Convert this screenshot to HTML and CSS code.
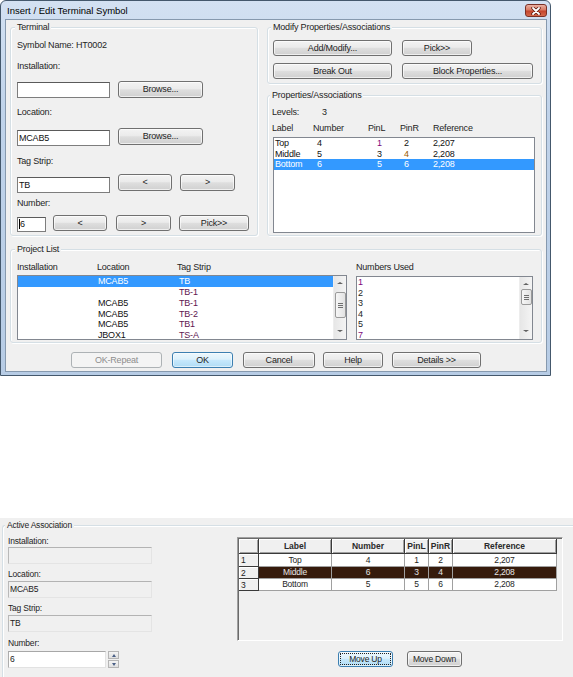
FILE: index.html
```html
<!DOCTYPE html>
<html>
<head>
	<title>Insert / Edit Terminal Symbol</title>
	<link rel="stylesheet" href="styles.css">
</head>
<body>
	<div class="window">
		<div class="titlebar">
			<span class="title">Insert / Edit Terminal Symbol</span>
			<span class="close">
				<svg width="10" height="8" viewBox="0 0 10 8">
					<path d="M2 1 L8 7 M8 1 L2 7" stroke="#5a1a10" stroke-width="3.4" stroke-linecap="round"/>
					<path d="M2 1 L8 7 M8 1 L2 7" stroke="#fff" stroke-width="1.8" stroke-linecap="round"/>
				</svg>
			</span>
		</div>

		<div class="client">
			<div class="top">
				<!-- Terminal -->
				<div class="group terminal">
					<div class="group-title">Terminal</div>
					<div class="lbl sym">Symbol Name: HT0002</div>
					<div class="lbl gap10">Installation:</div>
					<div class="row gap9">
						<div class="tb w93 off1"></div>
						<div class="btn w85 ml8">Browse...</div>
					</div>
					<div class="lbl gap9">Location:</div>
					<div class="row gap10">
						<div class="tb w93 off2">MCAB5</div>
						<div class="btn w85 ml8">Browse...</div>
					</div>
					<div class="lbl gap10">Tag Strip:</div>
					<div class="row gap7">
						<div class="tb w93 off3">TB</div>
						<div class="btn w54 ml8">&lt;</div>
						<div class="btn w55 ml8">&gt;</div>
					</div>
					<div class="lbl gap5">Number:</div>
					<div class="row gap6">
						<div class="tb w29 off2 short"><span class="caret"></span>6</div>
						<div class="btn w54 ml7 short">&lt;</div>
						<div class="btn w55 ml9 short">&gt;</div>
						<div class="btn w70 ml8 short">Pick&gt;&gt;</div>
					</div>
				</div>

				<div class="side">
					<div class="group modify">
						<div class="group-title">Modify Properties/Associations</div>
						<div class="row gap7">
							<div class="btn w119 short">Add/Modify...</div>
							<div class="btn w70 ml10 short">Pick&gt;&gt;</div>
						</div>
						<div class="row gap7">
							<div class="btn w119 short">Break Out</div>
							<div class="btn w131 ml10 short">Block Properties...</div>
						</div>
					</div>

					<div class="group props">
						<div class="group-title">Properties/Associations</div>
						<div class="lbl levels gap6"><span>Levels:</span><span>3</span></div>
						<div class="lbl prop-head gap5">
							<span>Label</span><span>Number</span><span>PinL</span><span>PinR</span><span>Reference</span>
						</div>
						<div class="listbox prop-list">
							<div class="prop-row"><span>Top</span><span>4</span><span class="c-purple">1</span><span>2</span><span>2,207</span></div>
							<div class="prop-row"><span>Middle</span><span>5</span><span>3</span><span class="c-amber">4</span><span>2,208</span></div>
							<div class="prop-row selected"><span>Bottom</span><span>6</span><span>5</span><span>6</span><span>2,208</span></div>
						</div>
					</div>
				</div>
			</div>

			<!-- Project List -->
			<div class="group project">
				<div class="group-title">Project List</div>
				<div class="project-body">
					<div class="proj-left">
						<div class="lbl proj-head"><span>Installation</span><span>Location</span><span>Tag Strip</span></div>
						<div class="listbox proj-list">
							<div class="list-rows">
								<div class="proj-row selected"><span></span><span>MCAB5</span><span>TB</span></div>
								<div class="proj-row"><span></span><span></span><span class="c-tag">TB-1</span></div>
								<div class="proj-row"><span></span><span>MCAB5</span><span class="c-tag">TB-1</span></div>
								<div class="proj-row"><span></span><span>MCAB5</span><span class="c-tag">TB-2</span></div>
								<div class="proj-row"><span></span><span>MCAB5</span><span class="c-tag">TB1</span></div>
								<div class="proj-row"><span></span><span>JBOX1</span><span class="c-tag">TS-A</span></div>
							</div>
							<div class="vscroll">
								<div class="arrow up"></div>
								<div class="thumb thumb-left"><i></i><i></i><i></i></div>
								<div class="arrow down"></div>
							</div>
						</div>
					</div>
					<div class="proj-right">
						<div class="lbl">Numbers Used</div>
						<div class="listbox used-list">
							<div class="list-rows">
								<div class="used-row c-purple">1</div>
								<div class="used-row">2</div>
								<div class="used-row">3</div>
								<div class="used-row">4</div>
								<div class="used-row">5</div>
								<div class="used-row c-purple">7</div>
							</div>
							<div class="vscroll">
								<div class="arrow up"></div>
								<div class="thumb thumb-right"><i></i><i></i><i></i></div>
								<div class="arrow down"></div>
							</div>
						</div>
					</div>
				</div>
			</div>

			<div class="actions">
				<div class="btn short w91 disabled">OK-Repeat</div>
				<div class="btn short w61 ml10 default">OK</div>
				<div class="btn short w72 ml10">Cancel</div>
				<div class="btn short w60 ml8">Help</div>
				<div class="btn short w89 ml9">Details &gt;&gt;</div>
			</div>
		</div>
	</div>

	<!-- Active association panel -->
	<div class="panel">
		<div class="group assoc">
			<div class="group-title">Active Association</div>
			<div class="assoc-body">
				<div class="assoc-left">
					<div class="lbl gap5">Installation:</div>
					<div class="field"></div>
					<div class="lbl gap5">Location:</div>
					<div class="field gap1">MCAB5</div>
					<div class="lbl gap5">Tag Strip:</div>
					<div class="field gap1">TB</div>
					<div class="lbl gap6">Number:</div>
					<div class="row gap2">
						<div class="field number">6</div>
						<div class="spin">
							<div class="spin-btn"><span class="tri up"></span></div>
							<div class="spin-btn"><span class="tri down"></span></div>
						</div>
					</div>
				</div>
				<div class="assoc-right">
					<div class="grid-frame">
						<table class="grid">
							<colgroup>
								<col class="gc-h"><col class="gc-wide"><col class="gc-wide"><col class="gc-pin"><col class="gc-pin"><col class="gc-ref">
							</colgroup>
							<tr class="grid-head">
								<th></th><th>Label</th><th>Number</th><th>PinL</th><th>PinR</th><th>Reference</th>
							</tr>
							<tr class="r1">
								<th class="rh">1</th><td>Top</td><td>4</td><td>1</td><td>2</td><td>2,207</td>
							</tr>
							<tr class="sel">
								<th class="rh">2</th><td>Middle</td><td>6</td><td>3</td><td>4</td><td>2,208</td>
							</tr>
							<tr>
								<th class="rh">3</th><td>Bottom</td><td>5</td><td>5</td><td>6</td><td>2,208</td>
							</tr>
						</table>
					</div>
					<div class="move-row">
						<div class="btn short w55 default focus">Move Up</div>
						<div class="btn short w55 ml14">Move Down</div>
					</div>
				</div>
			</div>
		</div>
	</div>
</body>
</html>
```

FILE: styles.css
```css
/* Page */

body { margin: 0; width: 573px; height: 677px; overflow: hidden; background: #fff; font-family: "Liberation Sans", Arial, sans-serif; font-size: 9px; letter-spacing: -0.2px; color: #1e1e1e; }

/* Window frame */

.window { box-sizing: border-box; width: 551px; height: 376px; border: 1px solid #44586c; border-radius: 6px 6px 0 0; background: linear-gradient(to bottom, #d3e1f2, #c0d3ea 30%, #b7cce5); display: flex; flex-direction: column; }
.titlebar { flex: none; height: 18px; display: flex; justify-content: space-between; align-items: flex-start; padding: 0 3px 0 6px; }
.title { font-size: 9.5px; letter-spacing: 0; line-height: 19px; color: #000; }
.close { box-sizing: border-box; margin-top: 3px; width: 22px; height: 13px; border: 1px solid #7a3026; border-radius: 3px; background: linear-gradient(to bottom, #eab0a2, #d87a63 45%, #c4452d 55%, #d4694c); display: flex; align-items: center; justify-content: center; }
.close svg { display: block; }
.client { flex: 1; margin: 0 3px 3px 4px; border: 1px solid #8699ae; background: #f0f0f0; padding: 7px 4px 0; }

/* Group boxes */

.group { box-sizing: border-box; border: 1px solid #d5dfe5; border-radius: 3px; box-shadow: inset 1px 1px 0 #fff, 1px 1px 0 #fff; display: flex; flex-direction: column; align-items: flex-start; }
.group-title { height: 11px; line-height: 11px; margin: -6px 0 0 -2px; padding: 0 2px; background: #f0f0f0; white-space: nowrap; }
.lbl { height: 11px; line-height: 11px; white-space: nowrap; }
.row { display: flex; align-items: flex-start; }

.gap1 { margin-top: 1px; }
.gap2 { margin-top: 2px; }
.gap5 { margin-top: 5px; }
.gap6 { margin-top: 6px; }
.gap7 { margin-top: 7px; }
.gap9 { margin-top: 9px; }
.gap10 { margin-top: 10px; }

.ml7 { margin-left: 7px; }
.ml8 { margin-left: 8px; }
.ml9 { margin-left: 9px; }
.ml10 { margin-left: 10px; }
.ml14 { margin-left: 14px; }

/* Controls */

.tb { box-sizing: border-box; height: 16px; border: 1px solid #7d7d7d; border-top-color: #5a5a5a; background: #fff; padding-left: 1px; line-height: 14px; color: #111; white-space: nowrap; }
.tb.short { height: 15px; line-height: 13px; }
.off1 { margin-top: 1px; }
.off2 { margin-top: 2px; }
.off3 { margin-top: 3px; }
.caret { display: inline-block; width: 1px; height: 10px; background: #000; vertical-align: -2px; }

.btn { box-sizing: border-box; height: 17px; border: 1px solid #707070; border-radius: 3px; background: linear-gradient(to bottom, #f3f3f3, #ebebeb 45%, #dedede 52%, #d0d0d0); box-shadow: inset 0 0 0 1px rgba(255, 255, 255, 0.65); text-align: center; line-height: 15px; color: #1e1e1e; white-space: nowrap; }
.btn.short { height: 16px; line-height: 14px; }
.btn.disabled { border-color: #adb2b5; background: #f4f4f4; box-shadow: none; color: #8d8d8d; }
.btn.default { border-color: #3c7fb1; background: linear-gradient(to bottom, #ecf7fd, #ddf1fc 45%, #c6e8fc 52%, #b0dcf5); box-shadow: inset 0 0 0 1px rgba(255, 255, 255, 0.55); }
.btn.focus { outline: 1px dotted #222; outline-offset: -3px; }

.w29 { width: 29px; }
.w54 { width: 54px; }
.w55 { width: 55px; }
.w60 { width: 60px; }
.w61 { width: 61px; }
.w70 { width: 70px; }
.w72 { width: 72px; }
.w85 { width: 85px; }
.w89 { width: 89px; }
.w91 { width: 91px; }
.w93 { width: 93px; }
.w119 { width: 119px; }
.w131 { width: 131px; }

/* Top part of the dialog */

.top { display: grid; grid-template-columns: 248px 275px; column-gap: 9px; height: 209px; }
.terminal { height: 209px; padding-left: 6px; }
.sym { margin-top: 7px; }
.side { display: flex; flex-direction: column; }
.modify { height: 57px; padding-left: 5px; }
.props { height: 141px; margin-top: 11px; padding-left: 4px; }

.levels { display: grid; grid-template-columns: 50px auto; }
.prop-head { display: grid; grid-template-columns: 41px 55px 32px 33px auto; }

.listbox { box-sizing: border-box; border: 1px solid #828790; background: #fff; overflow: hidden; }
.prop-list { margin: 3px 0 0 1px; width: 262px; height: 96px; }
.prop-row { display: grid; grid-template-columns: 42px 60px 27px 29px auto; height: 10.5px; line-height: 10.5px; padding-left: 1px; color: #111; }
.selected { background: #3399ff; color: #fff; }
.selected span { color: #fff; }

.c-purple { color: #7c0a7c; }
.c-amber { color: #9a5a00; }
.c-tag { color: #5e1650; }

/* Project list */

.project { height: 94px; margin-top: 13px; padding-left: 6px; }
.project-body { display: flex; margin-top: 7px; }
.proj-left { width: 330px; }
.proj-head { display: grid; grid-template-columns: 80px 80px auto; }
.proj-list { display: flex; margin-top: 2px; height: 65px; }
.list-rows { flex: 1; }
.proj-row { display: grid; grid-template-columns: 79px 81px auto; height: 10.8px; line-height: 10.8px; padding-left: 1px; color: #111; }
.proj-row.selected { height: 11px; }
.proj-right { width: 177px; margin-left: 9px; }
.used-list { display: flex; margin-top: 3px; height: 64px; }
.used-row { height: 10.5px; line-height: 10.5px; padding-left: 1px; }

.vscroll { width: 12px; display: flex; flex-direction: column; align-items: center; background: linear-gradient(to right, #e6e6e6, #f4f4f4); border-left: 1px solid #ededed; }
.arrow { width: 0; height: 0; border-left: 3px solid transparent; border-right: 3px solid transparent; }
.arrow.up { margin-top: 6px; border-bottom: 2px solid #606060; }
.arrow.down { margin-top: auto; margin-bottom: 7px; border-top: 2px solid #606060; }
.thumb { box-sizing: border-box; width: 11px; border: 1px solid #9a9a9a; border-radius: 2px; background: linear-gradient(to right, #f6f6f6, #e2e2e2); display: flex; flex-direction: column; align-items: center; justify-content: center; }
.thumb i { display: block; width: 5px; height: 1px; background: #6f6f6f; margin: 1px 0 0; }
.thumb-left { height: 26px; margin-top: 8px; }
.thumb-right { height: 16px; margin-top: 4px; }

.actions { display: flex; margin-top: 9px; padding-left: 61px; }

/* Active association panel */

.panel { box-sizing: border-box; margin-top: 142px; height: 159px; background: #f0f0f0; padding: 7px 0 0 2px; }
.assoc { height: 160px; border-right: none; border-bottom: none; border-radius: 3px 0 0 0; padding-left: 5px; font-size: 8.5px; }
.assoc .group-title { margin-left: -3px; }
.assoc-body { display: flex; }
.assoc-left { width: 144px; display: flex; flex-direction: column; }
.field { box-sizing: border-box; height: 17px; border: 1px solid #e4e4e4; border-top-color: #b3b3b3; border-left-color: #b9b9b9; background: #f0f0f0; padding-left: 1px; line-height: 15px; color: #222; }
.field.number { width: 98px; background: #fff; border-color: #a7a7a7 #e2e2e2 #e2e2e2 #adadad; }
.spin { margin-left: 2px; display: flex; flex-direction: column; gap: 1px; }
.spin-btn { box-sizing: border-box; width: 11px; height: 8px; border: 1px solid #b5b5b5; background: linear-gradient(to bottom, #f4f4f4, #e0e0e0); display: flex; align-items: center; justify-content: center; }
.tri { width: 0; height: 0; border-left: 2.5px solid transparent; border-right: 2.5px solid transparent; }
.tri.up { border-bottom: 3px solid #4a5f86; }
.tri.down { border-top: 3px solid #4a5f86; }

.assoc-right { margin-left: 85px; }
.grid-frame { box-sizing: border-box; margin-top: 6px; width: 326px; height: 104px; border: 1px solid; border-color: #a0a0a0 #fff #fff #a0a0a0; box-shadow: inset 1px 1px 0 #6a6a6a; padding: 1px 0 0 1px; }
.grid { table-layout: fixed; width: 318px; border-collapse: separate; border-spacing: 0; font-size: 8.5px; }
.gc-h { width: 20px; }
.gc-wide { width: 73px; }
.gc-pin { width: 24px; }
.gc-ref { width: 104px; }
.grid th, .grid td { padding: 0; white-space: nowrap; overflow: hidden; }
.grid-head th { height: 14px; background: #f0f0f0; border-right: 1px solid #3a3a3a; border-bottom: 1px solid #3a3a3a; box-shadow: inset 1px 1px 0 #fff, inset -1px -1px 0 #a0a0a0; text-align: center; font-weight: bold; color: #2a2a2a; letter-spacing: 0; }
.grid .rh { background: #f0f0f0; border-right: 1px solid #3a3a3a; border-bottom: 1px solid #3a3a3a; box-shadow: inset 1px 1px 0 #fff; text-align: left; padding-left: 2px; font-weight: normal; color: #222; }
.grid td { height: 11px; line-height: 11px; background: #fff; border-right: 1px solid #a0a0a0; border-bottom: 1px solid #a0a0a0; text-align: center; color: #1e1e1e; }
.grid .r1 td { height: 12px; }
.grid .sel td { background: #361b0c; color: #e6e6e6; }

.move-row { display: flex; margin-top: 10px; padding-left: 101px; }
```
